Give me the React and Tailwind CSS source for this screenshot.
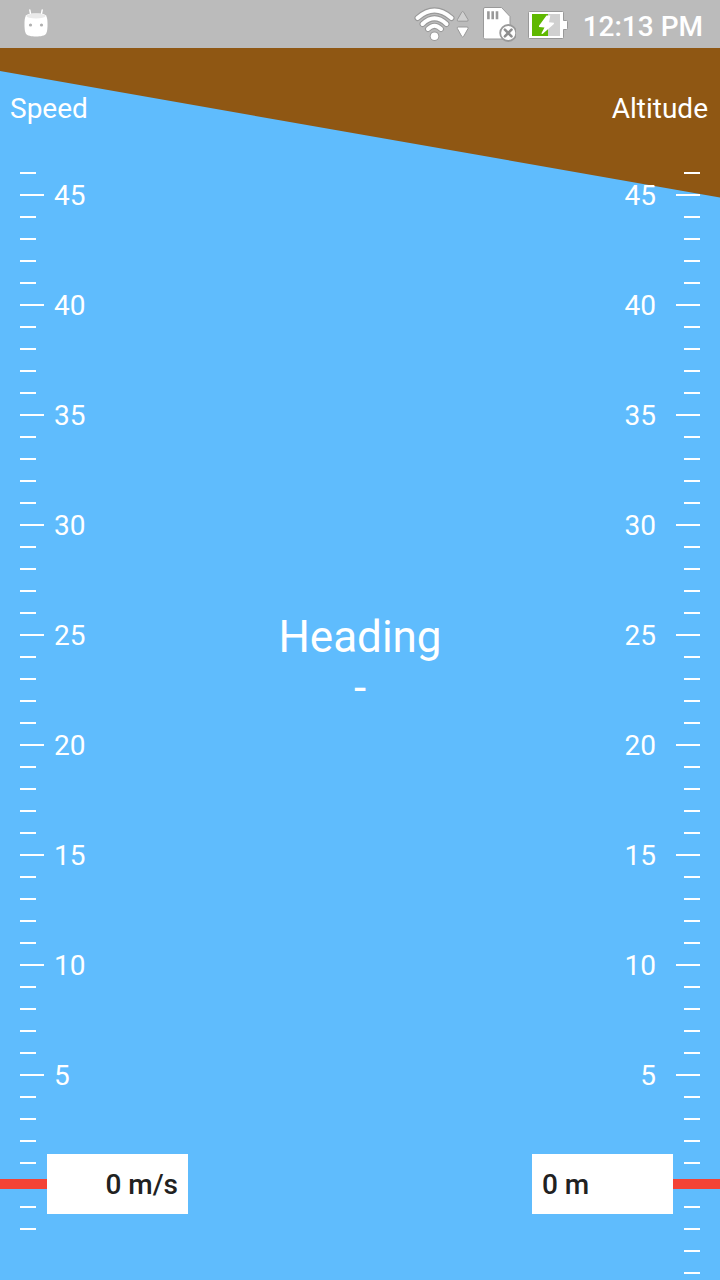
const FIRST_MARK = 46;

function marksDownTo(last) {
  return Array.from({ length: FIRST_MARK - last + 1 }, (_, i) => FIRST_MARK - i);
}

function AndroidIcon() {
  return (
    <svg className="h-12 w-12" viewBox="0 0 48 48" aria-label="Debugging" role="img">
      <path d="M18.700 14.500 17.800 10M29.300 14.500 30.200 10" stroke="#fff" strokeWidth="1.400" strokeLinecap="round" />
      <path d="M24 13.500c4.500 0 8.500.2 10 2 1.300 2 1.500 5 1.500 8 0 4 0 7.500-1.300 10-1.200 2.300-5.700 3-10.200 3s-9-.7-10.200-3c-1.300-2.500-1.300-6-1.300-10 0-3 .2-6 1.500-8 1.500-1.800 5.500-2 10-2z" fill="#fff" />
      <ellipse cx="24" cy="16" rx="9.500" ry="2.500" fill="#eaeaea" />
      <circle cx="18.500" cy="25" r="1.600" fill="#b0b0b0" />
      <circle cx="29.500" cy="25" r="1.600" fill="#b0b0b0" />
    </svg>
  );
}

function WifiIcon() {
  const arcs = "M17.500 18Q34.500 3 51.500 18M22.500 24Q34.500 12.500 46.500 24M28 29Q34.500 22.500 41 29";
  return (
    <svg className="h-12 w-[70px]" viewBox="0 0 70 48" aria-label="Wi-Fi" role="img">
      <path d={arcs} fill="none" stroke="#999" strokeWidth="6" strokeLinecap="round" />
      <circle cx="34.500" cy="36.200" r="4.800" fill="#999" />
      <path d={arcs} fill="none" stroke="#fff" strokeWidth="4" strokeLinecap="round" />
      <circle cx="34.500" cy="36.200" r="3.800" fill="#fff" />
      <path d="M61.700 12.200q1-1.400 2 0L68 19.600q.6 1.600-1 1.600h-8.600q-1.600 0-1-1.600z" fill="#d0d0d0" stroke="#999" strokeLinejoin="round" />
      <path d="M61.700 36.300q1 1.400 2 0L68 28.600q.6-1.600-1-1.600h-8.600q-1.600 0-1 1.600z" fill="#fff" stroke="#999" strokeLinejoin="round" />
    </svg>
  );
}

function SdCardIcon() {
  return (
    <svg className="h-12 w-9" viewBox="0 0 36 48" aria-label="SD card removed" role="img">
      <path d="M5 7.500h16.500l8.500 9v21q0 1.500-1.500 1.500H5q-1.500 0-1.500-1.500V9q0-1.500 1.500-1.500z" fill="#fff" stroke="#999" />
      <path d="M8.400 11.200v8M12.700 11.200v8M17 11.200v8" stroke="#999" strokeWidth="2.600" />
      <circle cx="28.200" cy="33" r="8" fill="#fff" stroke="#999" strokeWidth="1.800" />
      <path d="m24.900 29.700 6.600 6.600m0-6.600-6.600 6.600" stroke="#8e8e8e" strokeWidth="2.600" strokeLinecap="round" />
    </svg>
  );
}

function BatteryIcon() {
  return (
    <svg className="h-12 w-10" viewBox="0 0 40 48" aria-label="Battery charging" role="img">
      <path d="M1.500 11.500h33q1 0 1 1v8h3q1 0 1 1v7q0 1-1 1h-3v8q0 1-1 1h-33q-1 0-1-1v-25q0-1 1-1z" fill="#fff" stroke="#999" />
      <path d="M4 14h16v22H4z" fill="#5fb800" />
      <path d="M20 14h12v22H20z" fill="#d0d0d0" />
      <path d="M18.500 15.500h3.800l-1.300 6.700 4.900.6v1.200L14.500 34l-1.200-.6 3.200-5.900-5.500-.6v-1.200z" fill="#fff" />
    </svg>
  );
}

function StatusBar() {
  return (
    <header className="flex h-12 shrink-0 items-center bg-[#bbbbbb] pr-[17px] text-white">
      <div className="flex-1 pl-3">
        <AndroidIcon />
      </div>
      <WifiIcon />
      <div className="ml-2.5 flex gap-3">
        <SdCardIcon />
        <BatteryIcon />
      </div>
      <time className="ml-[15px] pt-1.5 text-[28px] leading-8 font-medium">12:13 PM</time>
    </header>
  );
}

function Horizon() {
  return (
    <svg
      className="absolute inset-0 h-full w-full"
      viewBox="0 0 720 1232"
      preserveAspectRatio="none"
      aria-hidden="true"
    >
      <path d="M0 0H720V149.500L0 23Z" fill="#8f5713" />
    </svg>
  );
}

function Readout({ text, mirrored }) {
  return (
    <div className={`absolute inset-x-0 -top-5 flex h-[60px] items-center ${mirrored ? "flex-row-reverse" : ""}`}>
      <div className="h-2.5 w-[47px] bg-[#f44336]" />
      <output
        className={`flex h-full flex-1 items-center bg-white px-2.5 pt-0.5 text-[28px] leading-8 font-medium text-[#212121] ${
          mirrored ? "justify-start" : "justify-end"
        }`}
      >
        {text}
      </output>
    </div>
  );
}

function Mark({ value, mirrored, readout }) {
  if (value === 0) {
    return (
      <li className="relative h-[22px]">
        <Readout text={readout} mirrored={mirrored} />
      </li>
    );
  }
  const major = value % 5 === 0;
  return (
    <li className={`flex h-[22px] items-center px-5 ${mirrored ? "flex-row-reverse" : ""}`}>
      <span className={`h-0.5 bg-white ${major ? "w-6" : "w-4"}`} />
      {major && (
        <span className={`pt-0.5 text-[28px] leading-8 ${mirrored ? "mr-5" : "ml-2.5"}`}>{value}</span>
      )}
    </li>
  );
}

function Gauge({ title, readout, lastMark, mirrored }) {
  return (
    <section className="w-[188px] shrink-0">
      <h2
        className={`pt-[45px] pb-[37px] text-[28px] leading-8 ${mirrored ? "pr-3 text-right" : "pl-2.5"}`}
      >
        {title}
      </h2>
      <ul>
        {marksDownTo(lastMark).map((value) => (
          <Mark key={value} value={value} mirrored={mirrored} readout={readout} />
        ))}
      </ul>
    </section>
  );
}

export default function App() {
  return (
    <div className="flex h-screen flex-col overflow-hidden font-[Roboto,sans-serif]">
      <StatusBar />
      <main className="relative min-h-0 flex-1 overflow-hidden bg-[#5fbcfd] text-white">
        <Horizon />
        <div className="relative flex h-full">
          <Gauge title="Speed" readout="0 m/s" lastMark={-2} />
          <section className="flex flex-1 flex-col items-center justify-center pb-[3px] text-[44px] leading-[51px]">
            <h1>Heading</h1>
            <p>-</p>
          </section>
          <Gauge title="Altitude" readout="0 m" lastMark={-4} mirrored />
        </div>
      </main>
    </div>
  );
}
